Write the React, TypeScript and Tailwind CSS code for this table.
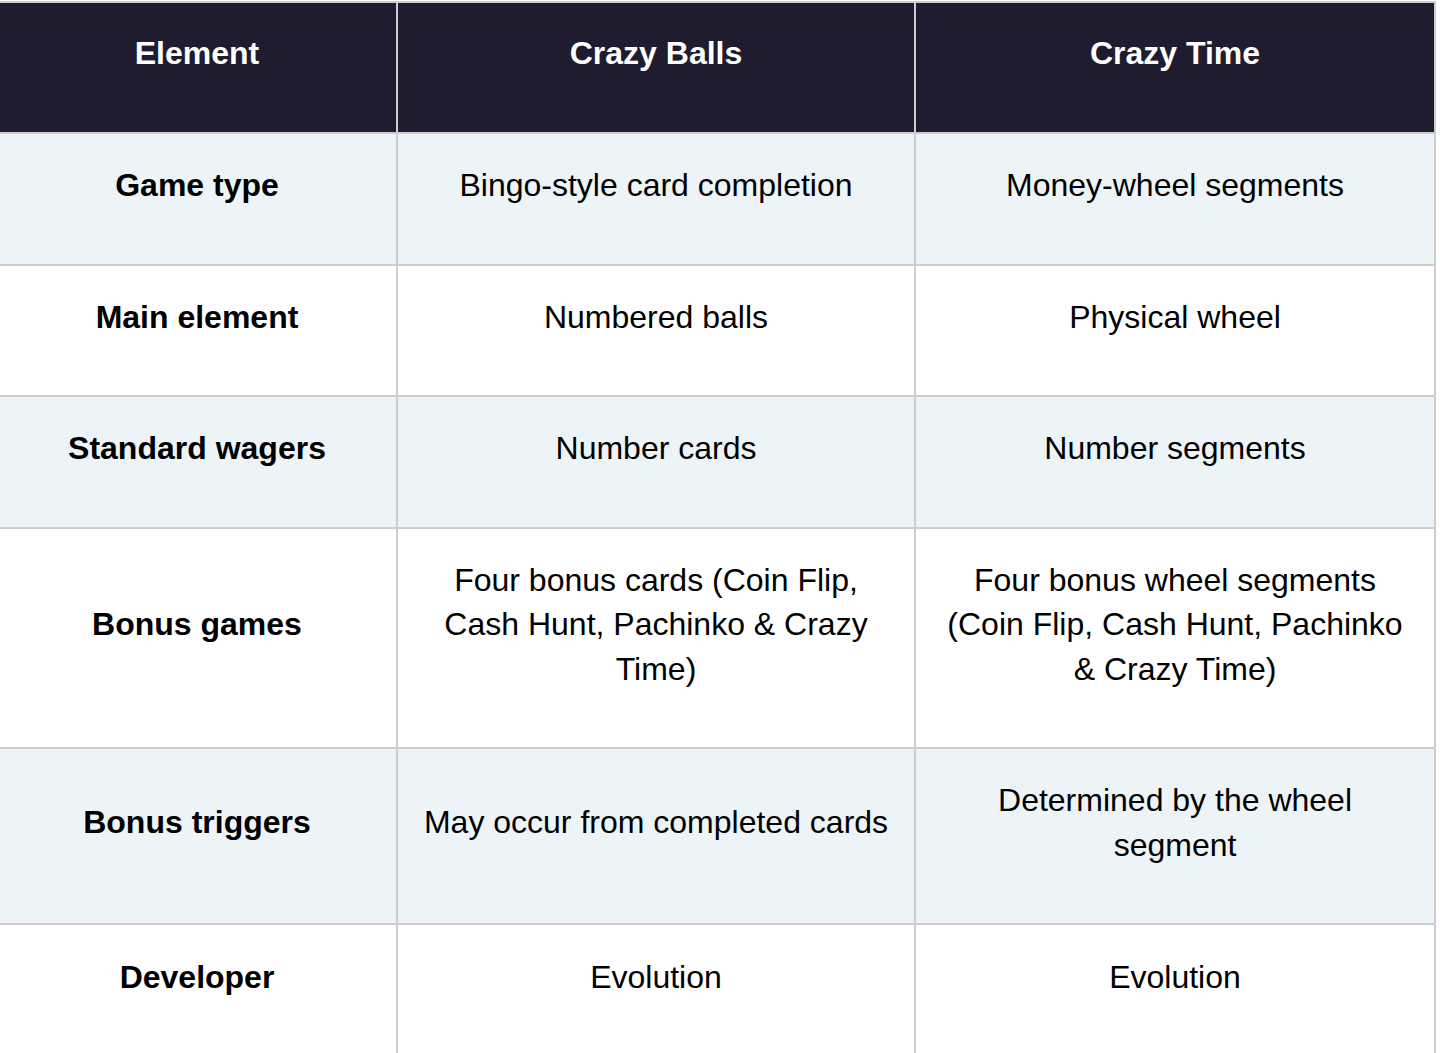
const rows: { label: string; balls: string; time: string }[] = [
  { label: 'Game type', balls: 'Bingo-style card completion', time: 'Money-wheel segments' },
  { label: 'Main element', balls: 'Numbered balls', time: 'Physical wheel' },
  { label: 'Standard wagers', balls: 'Number cards', time: 'Number segments' },
  {
    label: 'Bonus games',
    balls: 'Four bonus cards (Coin Flip, Cash Hunt, Pachinko & Crazy Time)',
    time: 'Four bonus wheel segments (Coin Flip, Cash Hunt, Pachinko & Crazy Time)',
  },
  { label: 'Bonus triggers', balls: 'May occur from completed cards', time: 'Determined by the wheel segment' },
  { label: 'Developer', balls: 'Evolution', time: 'Evolution' },
];

export default function App() {
  return (
    <div className="h-[1053px] w-[1440px] overflow-hidden bg-white font-['Liberation_Sans',Arial,sans-serif]">
      <table className="-ml-[4px] mt-[1px] w-[1438px] table-fixed border-collapse text-center text-[32px] leading-[44.5px] text-black">
        <colgroup>
          <col className="w-[400px]" />
          <col className="w-[518px]" />
          <col className="w-[520px]" />
        </colgroup>
        <thead>
          <tr className="bg-[#1e1c2e] text-white">
            <th className="border-2 border-[#cdcdcd] px-6 pt-[28px] pb-[56.5px] align-middle font-bold">Element</th>
            <th className="border-2 border-[#cdcdcd] px-6 pt-[28px] pb-[56.5px] align-middle font-bold">Crazy Balls</th>
            <th className="border-2 border-[#cdcdcd] px-6 pt-[28px] pb-[56.5px] align-middle font-bold">Crazy Time</th>
          </tr>
        </thead>
        <tbody>
          {rows.map((r, i) => {
            // the last row runs past the bottom of the shot
            const pad = i === rows.length - 1 ? 'pt-[30px] pb-[80px]' : 'pt-[29px] pb-[56px]';
            return (
              <tr key={r.label} className={i % 2 === 0 ? 'bg-[#edf4f7]' : 'bg-white'}>
                <td className={`border-2 border-[#cdcdcd] px-6 align-middle font-bold ${pad}`}>{r.label}</td>
                <td className={`border-2 border-[#cdcdcd] px-6 align-middle ${pad}`}>{r.balls}</td>
                <td className={`border-2 border-[#cdcdcd] px-6 align-middle ${pad}`}>{r.time}</td>
              </tr>
            );
          })}
        </tbody>
      </table>
    </div>
  );
}
